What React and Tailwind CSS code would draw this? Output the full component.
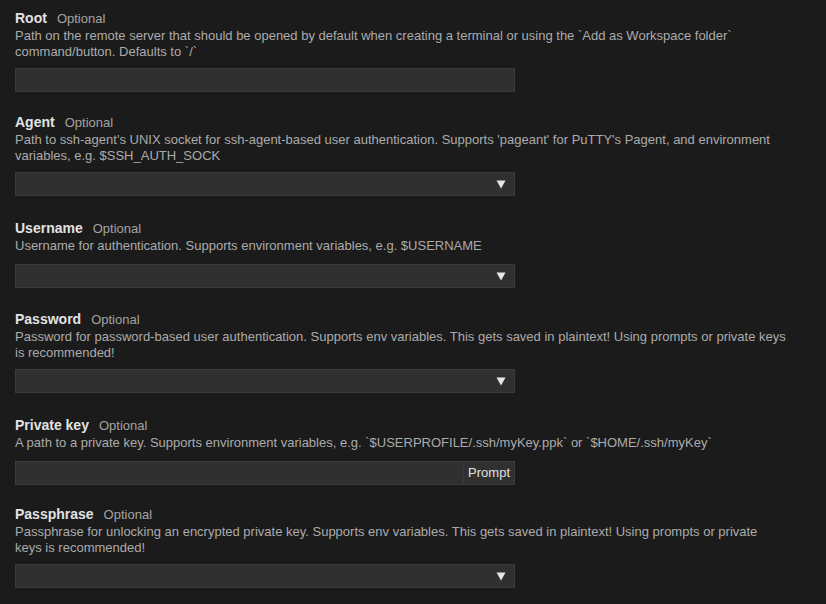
import React from 'react'

const fields = [
  {
    name: 'Root',
    lines: ['Path on the remote server that should be opened by default when creating a terminal or using the `Add as Workspace folder`', 'command/button. Defaults to `/`'],
    kind: 'text',
    top: 'mt-0',
  },
  {
    name: 'Agent',
    lines: ["Path to ssh-agent's UNIX socket for ssh-agent-based user authentication. Supports 'pageant' for PuTTY's Pagent, and environment", 'variables, e.g. $SSH_AUTH_SOCK'],
    kind: 'select',
    top: 'mt-[21px]',
  },
  {
    name: 'Username',
    lines: ['Username for authentication. Supports environment variables, e.g. $USERNAME'],
    kind: 'select',
    top: 'mt-[23px]',
  },
  {
    name: 'Password',
    lines: ['Password for password-based user authentication. Supports env variables. This gets saved in plaintext! Using prompts or private keys', 'is recommended!'],
    kind: 'select',
    top: 'mt-[22px]',
  },
  {
    name: 'Private key',
    lines: ['A path to a private key. Supports environment variables, e.g. `$USERPROFILE/.ssh/myKey.ppk` or `$HOME/.ssh/myKey`'],
    kind: 'prompt',
    top: 'mt-[23px]',
  },
  {
    name: 'Passphrase',
    lines: ['Passphrase for unlocking an encrypted private key. Supports env variables. This gets saved in plaintext! Using prompts or private', 'keys is recommended!'],
    kind: 'select',
    top: 'mt-[20px]',
  },
]

function Field({ field }) {
  // single-line descriptions sit a little further from their input
  const inputGap = field.lines.length === 1 ? 'mt-[10px]' : 'mt-2'
  return (
    <div className={field.top}>
      <div className="flex items-baseline leading-[19px]">
        <span className="text-[14px] font-bold text-[#e2e2e2]">{field.name}</span>
        <span className="ml-[10px] text-[13px] text-[#a3a3a3]">Optional</span>
      </div>
      <div className="text-[13px] leading-4 text-[#ababab] whitespace-nowrap">
        {field.lines.map((l, i) => (
          <div key={i}>{l}</div>
        ))}
      </div>
      <div className={inputGap + ' flex h-6 w-[500px] border border-[#3b3b3b] bg-[#303030]'}>
        <div className="flex-1" />
        {field.kind === 'select' && (
          <div className="flex w-6 items-center justify-center pr-[2px]">
            <svg width="10" height="9" viewBox="0 0 10 9">
              <path d="M0.5 0.5 L9.5 0.5 L5 8.5 Z" fill="#e6e6e6" />
            </svg>
          </div>
        )}
        {field.kind === 'prompt' && (
          <div className="flex items-center border-l border-[#3b3b3b] px-[4px] text-[13px] text-[#e0e0e0]">Prompt</div>
        )}
      </div>
    </div>
  )
}

export default function App() {
  return (
    <div className="min-h-screen bg-[#1b1b1b] px-[15px] pt-[9px]" style={{ fontFamily: '"Liberation Sans", Arial, sans-serif' }}>
      {fields.map((f) => (
        <Field key={f.name} field={f} />
      ))}
    </div>
  )
}
